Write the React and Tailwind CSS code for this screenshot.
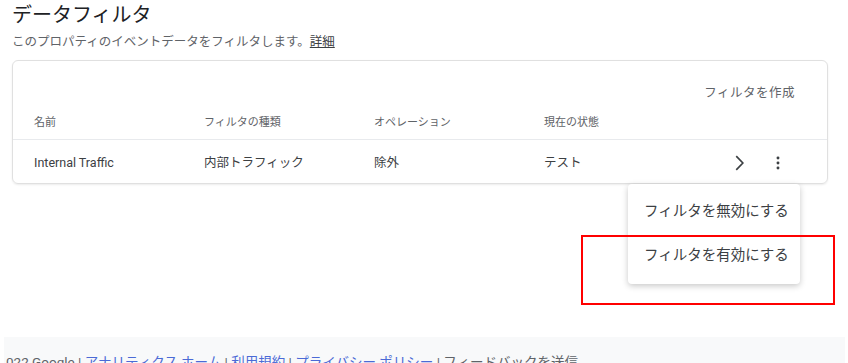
import React from "react";

const font = { fontFamily: 'Roboto, "Noto Sans CJK JP", sans-serif' };

export default function App() {
  return (
    <div className="w-[848px] h-[363px] overflow-hidden bg-white relative" style={font}>
      <div className="pl-[12px] pr-[20px]">
        <h1 className="text-[20px] leading-[28px] pt-[1px] text-[#202124] font-normal">データフィルタ</h1>
        <p className="mt-[4px] text-[12.5px] leading-[18px] text-[#5f6368]">
          このプロパティのイベントデータをフィルタします。<span className="underline text-[#3c4043]">詳細</span>
        </p>
        <div className="mt-[9px] w-[816px] h-[124px] border border-[#e0e0e0] rounded-[6px] shadow-[0_1px_2px_rgba(0,0,0,0.08)] flex flex-col">
          <div className="h-[54px] flex items-end justify-end pr-[32px] pb-[12px]">
            <span className="text-[12.5px] text-[#5f6368] tracking-[0.5px]">フィルタを作成</span>
          </div>
          <div className="h-[24px] flex items-start pl-[21px] text-[11px] text-[#5f6368]">
            <div className="w-[170px]">名前</div>
            <div className="w-[170px]">フィルタの種類</div>
            <div className="w-[170px]">オペレーション</div>
            <div className="w-[170px]">現在の状態</div>
          </div>
          <div className="flex-1 border-t border-[#e8eaed] flex items-center pt-[3px] pl-[21px] text-[12.5px] text-[#3c4043]">
            <div className="w-[170px]">Internal Traffic</div>
            <div className="w-[170px]">内部トラフィック</div>
            <div className="w-[170px]">除外</div>
            <div className="w-[170px]">テスト</div>
            <div className="ml-auto flex items-center pr-[41px] gap-[20px]">
              <svg width="22" height="22" viewBox="0 0 24 24"><path d="M9 4.5 16.2 12 9 19.5" fill="none" stroke="#3c4043" strokeWidth="1.8"/></svg>
              <svg width="16" height="16" viewBox="0 0 24 24"><circle cx="12" cy="4.5" r="2.2" fill="#3c4043"/><circle cx="12" cy="12" r="2.2" fill="#3c4043"/><circle cx="12" cy="19.5" r="2.2" fill="#3c4043"/></svg>
            </div>
          </div>
        </div>
      </div>

      <div className="absolute left-[628px] top-[184px] w-[172px] h-[100px] bg-white rounded-[4px] shadow-[0_2px_6px_rgba(0,0,0,0.22)] flex flex-col py-[6px] text-[14.5px] text-[#3c4043]">
        <div className="h-[44px] flex items-center pl-[16px]">フィルタを無効にする</div>
        <div className="h-[44px] flex items-center pl-[16px]">フィルタを有効にする</div>
      </div>

      <div className="absolute left-[581px] top-[235px] w-[254px] h-[70px] border-2 border-[#ff0000]"></div>

      <div className="absolute left-[4px] top-[337px] w-[841px] h-[40px] bg-[#f8f9fa]">
        <div className="pt-[16px] pl-[2px] text-[13.5px] leading-[18px] text-[#5f6368] whitespace-nowrap">
          022 Google | <span className="text-[#4b6ad6]">アナリティクス ホーム</span> | <span className="text-[#4b6ad6]">利用規約</span> | <span className="text-[#4b6ad6]">プライバシー ポリシー</span> | フィードバックを送信
        </div>
      </div>
    </div>
  );
}
